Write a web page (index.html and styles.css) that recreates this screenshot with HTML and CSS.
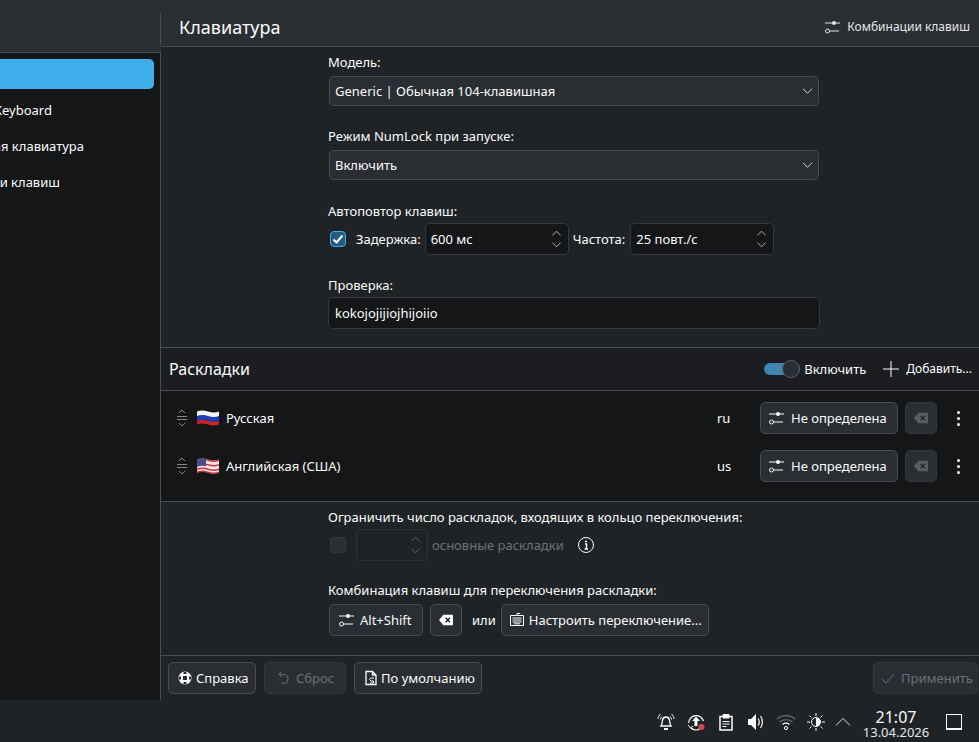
FILE: index.html
```html
<!DOCTYPE html>
<html lang="ru">
<head>
    <meta charset="UTF-8">
    <title>Клавиатура</title>
    <link rel="stylesheet" href="styles.css">
</head>
<body>
    <svg class="defs" width="0" height="0">
        <symbol id="sliders" viewBox="0 0 16 16">
            <path d="M1 4h15M5.500 12H15" fill="none" stroke="currentColor"/>
            <circle cx="10" cy="4" r="2" fill="currentColor"/>
            <circle cx="3.500" cy="12" r="2" fill="none" stroke="currentColor"/>
        </symbol>
        <symbol id="chevron" viewBox="0 0 12 8">
            <path d="M1 1.500l5 5 5-5" fill="none" stroke="currentColor"/>
        </symbol>
        <symbol id="updown" viewBox="0 0 12 22">
            <path d="M1 6.500l5-5 5 5M1 15.500l5 5 5-5" fill="none" stroke="currentColor"/>
        </symbol>
        <symbol id="clear" viewBox="0 0 16 12">
            <path d="M5 0h11v12H5L0 6z" fill="currentColor"/>
            <path d="M7.500 3.500l5 5M12.500 3.500l-5 5" stroke="#202326" stroke-width="1.600"/>
        </symbol>
        <symbol id="handle" viewBox="0 0 10 16">
            <path d="M2 3l3-3 3 3M2 13l3 3 3-3M0 6.500h10M0 9.500h10" fill="none" stroke="currentColor"/>
        </symbol>
    </svg>

    <div class="window">
        <aside class="sidebar">
            <div class="sidebar-head"></div>
            <ul class="nav">
                <li class="nav-item active"><span>Клавиатура</span></li>
                <li class="nav-item"><span>On-Screen Keyboard</span></li>
                <li class="nav-item"><span>Виртуальная клавиатура</span></li>
                <li class="nav-item"><span>Комбинации клавиш</span></li>
            </ul>
        </aside>

        <main class="main">
            <header class="page-head">
                <h1>Клавиатура</h1>
                <a class="head-action"><svg class="ico"><use href="#sliders"/></svg>Комбинации клавиш</a>
            </header>

            <section class="form">
                <div class="field">
                    <label>Модель:</label>
                    <div class="combo">Generic | Обычная 104-клавишная<svg class="chev"><use href="#chevron"/></svg></div>
                </div>
                <div class="field">
                    <label>Режим NumLock при запуске:</label>
                    <div class="combo">Включить<svg class="chev"><use href="#chevron"/></svg></div>
                </div>
                <div class="field field-repeat">
                    <label>Автоповтор клавиш:</label>
                    <div class="row repeat">
                        <span class="check on"><svg viewBox="0 0 14 14"><path d="M2.500 7.500l3 3 6-7" fill="none" stroke="#fcfcfc" stroke-width="2"/></svg></span>
                        <span class="repeat-label">Задержка:</span>
                        <div class="spin delay">600 мс<svg class="arrows"><use href="#updown"/></svg></div>
                        <span>Частота:</span>
                        <div class="spin rate">25 повт./с<svg class="arrows"><use href="#updown"/></svg></div>
                    </div>
                </div>
                <div class="field field-test">
                    <label>Проверка:</label>
                    <div class="text-input">kokojojijiojhijoiio</div>
                </div>
            </section>

            <section class="layouts">
                <div class="layouts-head">
                    <h2>Раскладки</h2>
                    <span class="toggle"><i></i></span>
                    <span>Включить</span>
                    <svg class="plus" viewBox="0 0 16 16"><path d="M8 0v16M0 8h16" stroke="#fcfcfc"/></svg>
                    <span class="add-label">Добавить...</span>
                </div>
                <div class="layout-list">
                    <div class="layout-row">
                        <svg class="handle"><use href="#handle"/></svg>
                        <svg class="flag" viewBox="0 0 22 16">
                            <path d="M0 1.500q5-2 11 0t11 0v5q-5 2-11 0T0 6.500z" fill="#f4f4f6"/>
                            <path d="M0 6q5-2 11 0t11 0v5q-5 2-11 0T0 11z" fill="#1f3fb4"/>
                            <path d="M0 11q5-2 11 0t11 0v3.500q-5 2-11 0T0 14.500z" fill="#d8201c"/>
                        </svg>
                        <span class="layout-name">Русская</span>
                        <span class="layout-code">ru</span>
                        <button class="btn variant"><svg class="ico"><use href="#sliders"/></svg>Не определена</button>
                        <button class="btn clear-off"><svg class="clear-ico"><use href="#clear"/></svg></button>
                        <span class="dots"><i></i><i></i><i></i></span>
                    </div>
                    <div class="layout-row">
                        <svg class="handle"><use href="#handle"/></svg>
                        <svg class="flag" viewBox="0 0 22 16">
                            <path d="M0 1.500q5-2 11 0t11 0v13q-5 2-11 0T0 14.500z" fill="#f1e4e6"/>
                            <path d="M0 1.500q5-2 11 0t11 0v1.500q-5 2-11 0T0 3zM0 6q5-2 11 0t11 0v1.500q-5 2-11 0T0 7.500zM0 10.500q5-2 11 0t11 0V12q-5 2-11 0T0 12zM0 13.500q5-2 11 0t11 0V15q-5 2-11 0T0 15z" fill="#c9323c"/>
                            <path d="M0 1.500q5-2 9-.5v7.500q-4-1.500-9 .5z" fill="#4a4c8c"/>
                        </svg>
                        <span class="layout-name">Английская (США)</span>
                        <span class="layout-code">us</span>
                        <button class="btn variant"><svg class="ico"><use href="#sliders"/></svg>Не определена</button>
                        <button class="btn clear-off"><svg class="clear-ico"><use href="#clear"/></svg></button>
                        <span class="dots"><i></i><i></i><i></i></span>
                    </div>
                </div>
            </section>

            <section class="form form-lower">
                <div class="field">
                    <label>Ограничить число раскладок, входящих в кольцо переключения:</label>
                    <div class="row limit">
                        <span class="check off"></span>
                        <div class="spin spin-off"><svg class="arrows"><use href="#updown"/></svg></div>
                        <span class="muted">основные раскладки</span>
                        <svg class="info" viewBox="0 0 16 16">
                            <circle cx="8" cy="8" r="7.500" fill="none" stroke="#fcfcfc"/>
                            <path d="M7 7h1.500v5M6.500 12h3.500" fill="none" stroke="#fcfcfc" stroke-width="1.400"/>
                            <circle cx="8" cy="4.500" r="1" fill="#fcfcfc"/>
                        </svg>
                    </div>
                </div>
                <div class="field">
                    <label>Комбинация клавиш для переключения раскладки:</label>
                    <div class="row switch">
                        <button class="btn shortcut"><svg class="ico"><use href="#sliders"/></svg>Alt+Shift</button>
                        <button class="btn clear-on"><svg class="clear-ico"><use href="#clear"/></svg></button>
                        <span class="or">или</span>
                        <button class="btn configure">
                            <svg class="ico" viewBox="0 0 16 16"><path d="M8 3.500V1.500h3M1.500 3.500h13v10h-13zM3.500 6h9M3.500 8h9M3.500 10h9M5 11.800h6" fill="none" stroke="#fcfcfc"/></svg>
                            Настроить переключение...
                        </button>
                    </div>
                </div>
            </section>

            <footer class="page-foot">
                <button class="btn help">
                    <svg class="ico" viewBox="0 0 16 16">
                        <circle cx="8" cy="8" r="6.500" fill="#fcfcfc"/>
                        <path d="M6 6h4v4H6zM6.500 2h3v2h-3zM6.500 12h3v2h-3zM2 6.500h2v3H2zM12 6.500h2v3h-2z" fill="#2a2e32"/>
                    </svg>
                    Справка
                </button>
                <button class="btn reset" disabled>
                    <svg class="ico" viewBox="0 0 16 16"><path d="M5.500 1.500L3 4.500l3 2.500M3.500 4.500h4a4.500 4.500 0 1 1-2 8.500" fill="none" stroke="#6e7173"/></svg>
                    Сброс
                </button>
                <button class="btn defaults">
                    <svg class="ico" viewBox="0 0 16 16"><path d="M3 1.500h6.500l3.500 3.500v9.500H3zM9.500 1.500V5H13" fill="none" stroke="#fcfcfc" stroke-width="1.300"/><path d="M11 8H8L6.500 9.500 8 11h2.500v2H7" fill="none" stroke="#fcfcfc"/></svg>
                    По умолчанию
                </button>
                <button class="btn apply" disabled>
                    <svg class="ico" viewBox="0 0 16 16"><path d="M2 9l4 4 8-9" fill="none" stroke="#6e7173"/></svg>
                    Применить
                </button>
            </footer>
        </main>
    </div>

    <div class="panel">
        <svg class="tray" viewBox="0 0 18 18"><path d="M4 13c1.500-2 1-4 1.500-6C6 5 7.500 4 9 4s3 1 3.500 3c.5 2 0 4 1.500 6z" fill="#202326" stroke="#fcfcfc" stroke-width="1.300"/><path d="M7 16h4" stroke="#fcfcfc" stroke-width="2"/><path d="M1 6c0-2 1-3.500 2.500-5M17 6c0-2-1-3.500-2.500-5M3.500 6.500c0-1 .5-2 1.500-3M14.500 6.500c0-1-.5-2-1.500-3" fill="none" stroke="#fcfcfc"/></svg>
        <svg class="tray" viewBox="0 0 18 18"><path d="M1.700 10A7.500 7.500 0 0 1 16.400 8M13 15.800A7.500 7.500 0 0 1 3.500 14.500" fill="none" stroke="#fcfcfc" stroke-width="1.300"/><path d="M1 12l2.500 3 2.500-2" fill="none" stroke="#fcfcfc"/><path d="M9 3.500L5 8h2.500v5h3V8H13z" fill="#fcfcfc"/><circle cx="14.500" cy="14" r="3" fill="#da4453"/></svg>
        <svg class="tray" viewBox="0 0 18 18"><path d="M3 3.500h12v13.500H3z" fill="none" stroke="#fcfcfc" stroke-width="1.500"/><path d="M6 1.500h6V5H6z" fill="#fcfcfc" stroke="#fcfcfc"/><path d="M5.500 8.500h7M5.500 11h7M5.500 13.500h4" stroke="#fcfcfc"/></svg>
        <svg class="tray" viewBox="0 0 18 18"><path d="M1 6h3l5-5v16l-5-5H1z" fill="#fcfcfc"/><path d="M11 5.500c1.500 2 1.500 5 0 7M13.500 3c2.500 3.500 2.500 8.500 0 12" fill="none" stroke="#fcfcfc" stroke-width="1.200"/></svg>
        <svg class="tray wifi" viewBox="0 0 20 18"><path d="M1 6c5-4.500 13-4.500 18 0M3.500 9c3.500-3 9.500-3 13 0" fill="none" stroke="#6e7173" stroke-width="1.200"/><path d="M6.500 11.500c2-1.500 5-1.500 7 0" fill="none" stroke="#fcfcfc" stroke-width="1.200"/><circle cx="10" cy="15" r="1.600" fill="none" stroke="#fcfcfc"/></svg>
        <svg class="tray" viewBox="0 0 18 18"><circle cx="9" cy="9" r="4.500" fill="none" stroke="#fcfcfc"/><path d="M9 4.500a4.500 4.500 0 0 1 0 9z" fill="#fcfcfc"/><path d="M9 0v3M9 15v3M0 9h3M15 9h3M2.500 2.500l2 2M13.500 13.500l2 2M2.500 15.500l2-2M13.500 4.500l2-2" stroke="#fcfcfc"/></svg>
        <svg class="tray expander" viewBox="0 0 18 10"><path d="M1 9l8-8 8 8" fill="none" stroke="#fcfcfc"/></svg>
        <div class="clock">
            <span class="time">21:07</span>
            <span class="date">13.04.2026</span>
        </div>
        <span class="show-desktop"></span>
    </div>
</body>
</html>
```

FILE: styles.css
```css
* {
    box-sizing: border-box;
}
body {
    margin: 0;
    height: 742px;
    overflow: hidden;
    background-color: #202326;
    color: #fcfcfc;
    font-family: "Noto Sans", sans-serif;
    font-size: 13px;
    line-height: 18px;
}
.defs {
    position: absolute;
}
.ico {
    width: 16px;
    height: 16px;
    flex: none;
}
.window {
    display: flex;
    height: 700px;
    overflow: hidden;
}

/* left list */
.sidebar {
    width: 161px;
    flex: none;
    display: flex;
    flex-direction: column;
    overflow: hidden;
}
.sidebar-head {
    height: 53px;
    flex: none;
    background-color: #2a2e32;
    border-bottom: 1px solid #4a4d51;
}
.nav {
    flex: 1;
    margin: 0;
    padding: 6px 6px 0 0;
    list-style: none;
    background-color: #141618;
    border-right: 1px solid #4a4d51;
}
.nav-item {
    height: 30px;
    margin-bottom: 6px;
    display: flex;
    align-items: center;
    white-space: nowrap;
    overflow: hidden;
}
.nav-item span {
    margin-left: -73px;
}
.nav-item.active {
    background-color: #3daee9;
    border-radius: 0 5px 5px 0;
}

/* right part */
.main {
    flex: none;
    width: 818px;
    display: flex;
    flex-direction: column;
}
.page-head {
    height: 47px;
    flex: none;
    padding: 7px 9px 0 18px;
    display: flex;
    align-items: center;
    justify-content: space-between;
    background-color: #2a2e32;
    border-bottom: 1px solid #4a4d51;
    position: relative;
}
.page-head::before {
    content: "";
    position: absolute;
    left: -1px;
    top: 13px;
    height: 32px;
    border-left: 1px solid #4a4d51;
}
.page-head h1 {
    margin: 0;
    font-size: 18px;
    font-weight: 400;
    line-height: 24px;
}
.head-action {
    display: flex;
    align-items: center;
    gap: 7px;
    font-size: 12px;
    color: #e4e5e6;
}

.form {
    flex: none;
    padding: 6px 0 0 167px;
    height: 301px;
    display: flex;
    flex-direction: column;
    gap: 21px;
    border-bottom: 1px solid #4a4d51;
}
.field label {
    display: block;
    margin-bottom: 5px;
}
.field-repeat {
    margin-top: 1px;
}
.field-test label {
    margin-bottom: 3px;
}
.row {
    display: flex;
    align-items: center;
}
.combo {
    width: 490px;
    height: 30px;
    margin-left: 1px;
    padding: 0 5px;
    display: flex;
    align-items: center;
    justify-content: space-between;
    background-color: #2a2e32;
    border: 1px solid #4a4d51;
    border-radius: 5px;
}
.chev {
    width: 11px;
    height: 8px;
    color: #e4e5e6;
}
.repeat {
    height: 32px;
    margin-top: -2px;
}
.check {
    width: 16px;
    height: 16px;
    flex: none;
    margin-left: 2px;
    border-radius: 4px;
    display: block;
}
.check svg {
    display: block;
}
.check.on {
    background-color: #245a7e;
    border: 1px solid #3daee9;
}
.check.off {
    background-color: #2a2e32;
    border: 1px solid #34373b;
}
.repeat-label {
    margin: 0 4px 0 10px;
}
.spin {
    height: 32px;
    padding: 0 6px 0 5px;
    display: flex;
    align-items: center;
    justify-content: space-between;
    background-color: #141618;
    border: 1px solid #34373b;
    border-radius: 5px;
}
.delay {
    width: 144px;
    margin-right: 4px;
}
.rate {
    width: 144px;
    margin-left: 5px;
}
.arrows {
    width: 11px;
    height: 18px;
    color: #d5d6d7;
}
.text-input {
    width: 492px;
    height: 32px;
    padding: 0 6px;
    display: flex;
    align-items: center;
    background-color: #141618;
    border: 1px solid #34373b;
    border-radius: 5px;
}

.layouts {
    flex: none;
    background-color: #1b1d20;
    border-bottom: 1px solid #4a4d51;
}
.layouts-head {
    height: 43px;
    padding: 0 7px 0 8px;
    display: flex;
    align-items: center;
    border-bottom: 1px solid #4a4d51;
}
.layouts-head h2 {
    margin: 0 auto 0 0;
    font-size: 16px;
    font-weight: 400;
}
.toggle {
    width: 36px;
    height: 12px;
    margin-right: 4px;
    border-radius: 6px;
    background-color: #3f85b0;
    display: block;
    position: relative;
}
.toggle i {
    position: absolute;
    right: 0;
    top: -3px;
    width: 18px;
    height: 18px;
    border-radius: 50%;
    background-color: #2a2e32;
    border: 1px solid #5b5e62;
}
.plus {
    width: 16px;
    height: 16px;
    margin: 0 7px 0 17px;
}
.add-label {
    font-size: 12px;
}
.layout-list {
    height: 110px;
    padding-top: 3px;
    background-color: #141618;
}
.layout-row {
    height: 48px;
    padding: 0 19px 0 16px;
    display: flex;
    align-items: center;
}
.handle {
    width: 10px;
    height: 16px;
    color: #85878a;
}
.flag {
    width: 22px;
    height: 16px;
    margin-left: 10px;
}
.layout-name {
    margin-left: 7px;
    flex: 1;
}
.layout-code {
    width: 43px;
}
.btn {
    height: 32px;
    padding: 0 8px;
    display: flex;
    align-items: center;
    gap: 7px;
    background-color: #2a2e32;
    border: 1px solid #4a4d51;
    border-radius: 5px;
    color: #fcfcfc;
    font: inherit;
    white-space: nowrap;
}
.btn:disabled {
    color: #6e7173;
    border-color: #34373b;
}
.variant {
    width: 138px;
    gap: 7px;
    padding: 0 7px;
}
.clear-off {
    width: 32px;
    margin-left: 7px;
    justify-content: center;
    border-color: #34373b;
    color: #5a5d60;
}
.clear-ico {
    width: 16px;
    height: 12px;
}
.dots {
    margin-left: 20px;
    width: 3px;
    display: flex;
    flex-direction: column;
    gap: 3px;
}
.dots i {
    width: 3px;
    height: 3px;
    background-color: #fcfcfc;
    border-radius: 50%;
}

.form-lower {
    height: 154px;
    gap: 20px;
}
.limit {
    height: 32px;
    margin-top: -2px;
}
.spin-off {
    width: 72px;
    margin-left: 10px;
    justify-content: flex-end;
    background-color: transparent;
    border-color: #2f3236;
}
.spin-off .arrows {
    color: #6e7173;
}
.muted {
    margin-left: 4px;
    color: #6e7173;
}
.info {
    width: 16px;
    height: 16px;
    margin-left: 14px;
}
.switch {
    margin-left: 1px;
}
.shortcut {
    width: 94px;
    gap: 6px;
}
.clear-on {
    width: 32px;
    margin-left: 7px;
    justify-content: center;
}
.clear-on .clear-ico {
    color: #fcfcfc;
}
.or {
    margin: 0 5px 0 10px;
}
.configure {
    width: 208px;
    gap: 4px;
    padding: 0 7px;
}

.page-foot {
    flex: 1;
    padding: 6px 1px 0 7px;
    display: flex;
    gap: 8px;
}
.help {
    width: 88px;
    gap: 3px;
}
.reset {
    width: 82px;
    gap: 4px;
    padding: 0 11px;
}
.defaults {
    width: 128px;
    gap: 2px;
}
.apply {
    width: 105px;
    margin-left: auto;
    gap: 5px;
    padding: 0 6px;
}

/* task bar */
.panel {
    height: 42px;
    padding: 2px 17px 0 0;
    display: flex;
    align-items: center;
    justify-content: flex-end;
    background-color: #202326;
}
.tray {
    width: 18px;
    height: 18px;
    margin-right: 12px;
}
.wifi {
    width: 20px;
    margin: 0 11px 0 -1px;
}
.expander {
    width: 16px;
    height: 10px;
    margin-right: 0;
    margin-left: -2px;
}
.clock {
    width: 66px;
    margin: 4px 17px 0 12px;
    display: flex;
    flex-direction: column;
    align-items: center;
}
.time {
    font-size: 16px;
    line-height: 16px;
}
.date {
    font-size: 13px;
    line-height: 14px;
    color: #e4e5e6;
}
.show-desktop {
    width: 16px;
    height: 16px;
    border: 1px solid #fcfcfc;
    border-bottom-width: 2px;
    display: block;
}
```
